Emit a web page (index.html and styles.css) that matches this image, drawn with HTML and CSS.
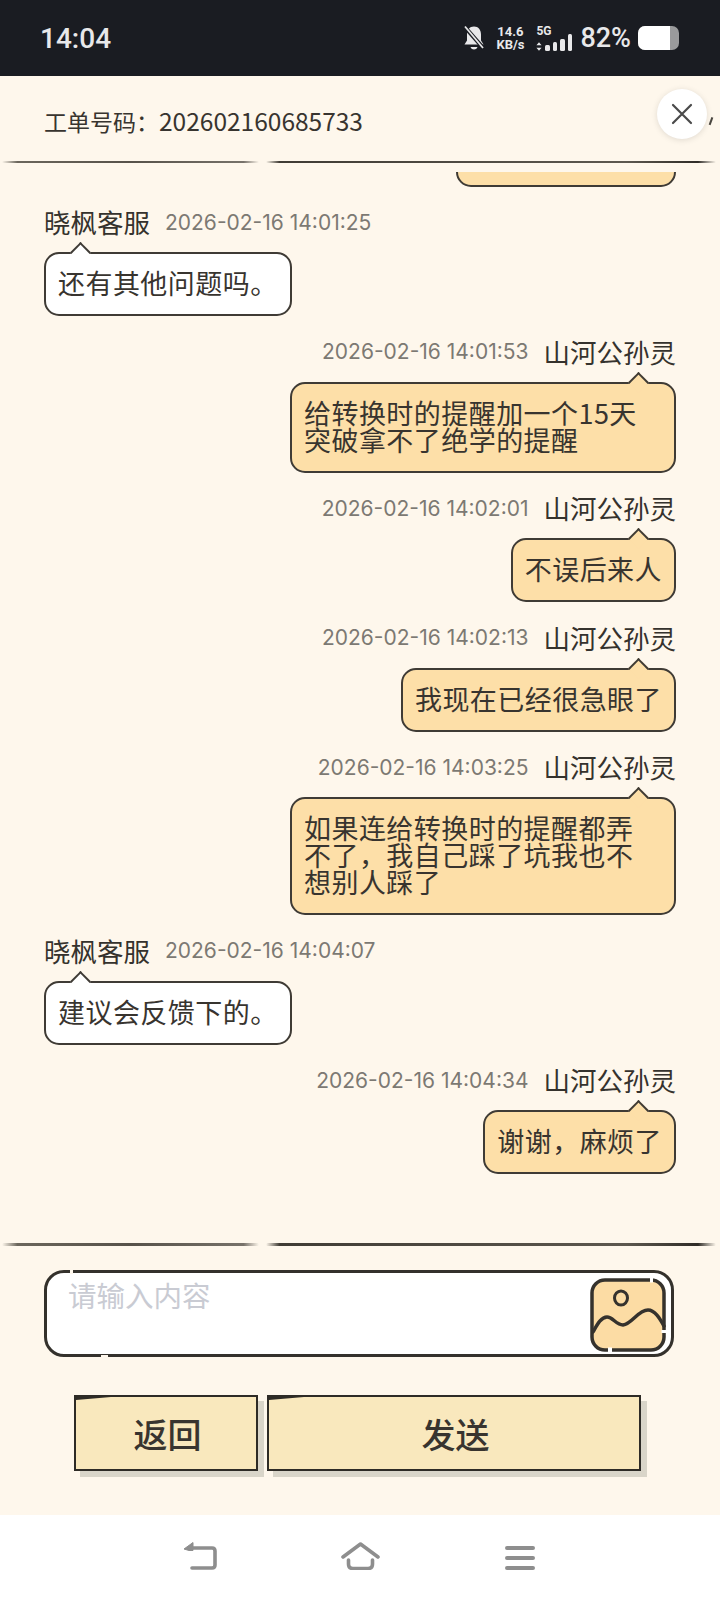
FILE: index.html
```html
<!DOCTYPE html>
<html lang="zh-CN">
<head>
  <meta charset="UTF-8" />
  <meta name="viewport" content="width=device-width, initial-scale=1" />
  <title>工单详情</title>
  <link rel="stylesheet" href="styles.css">
</head>
<body>
  <div class="statusBar">
    <span class="clock">14:04</span>
    <div class="statusIcons">
      <svg class="bellIcon" width="22" height="26" viewBox="0 0 22 26">
        <path d="M11 1.500c-4.500 0-7 3.500-7 8v6l-2.500 4h19l-2.500-4v-6c0-4.500-2.500-8-7-8z" fill="#e8e8ea"/>
        <path d="M7.500 22c.8 1.800 2 2.500 3.500 2.500s2.700-.7 3.500-2.500z" fill="#e8e8ea"/>
        <path d="M1 1l20 23" stroke="#1a1c22" stroke-width="4"/>
        <path d="M2 1.500l18 21.500" stroke="#e8e8ea" stroke-width="1.800"/>
      </svg>
      <div class="netSpeed"><span>14.6</span><span>KB/s</span></div>
      <div class="signal">
        <div class="signalType">
          <span>5G</span>
          <svg width="6" height="9" viewBox="0 0 7 10"><path d="M3.500 0l3 3.600h-6zM3.500 10l-3-3.600h6z" fill="#e8e8ea"/></svg>
        </div>
        <div class="signalBars"><i class="barA"></i><i class="barB"></i><i class="barC"></i><i class="barD"></i></div>
      </div>
      <span class="batteryText">82%</span>
      <div class="battery"><div class="batteryFill"></div></div>
    </div>
  </div>

  <main class="ticket">
    <header class="ticketHead">工单号码：<span class="ticketNo">202602160685733</span></header>
    <button class="closeBtn" aria-label="关闭">
      <svg width="22" height="22" viewBox="0 0 22 22"><path d="M2 2l18 18M20 2L2 20" stroke="#4a4a4a" stroke-width="2.200" stroke-linecap="round"/></svg>
    </button>
    <div class="divider"><span class="dividerShort"></span><span class="dividerLong"></span></div>

    <section class="chat">
      <div class="msg mine">
        <div class="bubble bubbleClipped"></div>
      </div>

      <div class="msg">
        <div class="msgHead"><span class="name">晓枫客服</span><span class="time">2026-02-16 14:01:25</span></div>
        <div class="bubble">还有其他问题吗。</div>
      </div>

      <div class="msg mine">
        <div class="msgHead"><span class="name">山河公孙灵</span><span class="time">2026-02-16 14:01:53</span></div>
        <div class="bubble bubbleLong">给转换时的提醒加一个15天突破拿不了绝学的提醒</div>
      </div>

      <div class="msg mine">
        <div class="msgHead"><span class="name">山河公孙灵</span><span class="time">2026-02-16 14:02:01</span></div>
        <div class="bubble">不误后来人</div>
      </div>

      <div class="msg mine">
        <div class="msgHead"><span class="name">山河公孙灵</span><span class="time">2026-02-16 14:02:13</span></div>
        <div class="bubble">我现在已经很急眼了</div>
      </div>

      <div class="msg mine">
        <div class="msgHead"><span class="name">山河公孙灵</span><span class="time">2026-02-16 14:03:25</span></div>
        <div class="bubble bubbleLong">如果连给转换时的提醒都弄不了，我自己踩了坑我也不想别人踩了</div>
      </div>

      <div class="msg">
        <div class="msgHead"><span class="name">晓枫客服</span><span class="time">2026-02-16 14:04:07</span></div>
        <div class="bubble">建议会反馈下的。</div>
      </div>

      <div class="msg mine">
        <div class="msgHead"><span class="name">山河公孙灵</span><span class="time">2026-02-16 14:04:34</span></div>
        <div class="bubble">谢谢，麻烦了</div>
      </div>
    </section>

    <div class="divider dividerThick"><span class="dividerShort"></span><span class="dividerLong"></span></div>

    <div class="composer">
      <span class="placeholder">请输入内容</span>
      <svg class="imageBtn" width="76" height="74" viewBox="0 0 76 74">
        <rect x="2" y="2" width="72" height="70" rx="13" fill="#fcdca4" stroke="#35322d" stroke-width="3.500"/>
        <ellipse cx="31" cy="20" rx="6.500" ry="7" fill="none" stroke="#35322d" stroke-width="3"/>
        <path d="M3 54c4-7 8-15 14-15 6 0 9 8 16 8 9-1 15-15 25-15 7 0 12 9 16 16" fill="none" stroke="#35322d" stroke-width="3.500" stroke-linecap="round"/>
        <path d="M60 2h3M74 52v3M18 72h4" fill="none" stroke="#fff" stroke-width="5"/>
      </svg>
    </div>

    <div class="actions">
      <button class="sketchBtn backBtn">返回</button>
      <button class="sketchBtn sendBtn">发送</button>
    </div>
  </main>

  <nav class="navBar">
    <svg width="34" height="28" viewBox="0 0 34 28">
      <path d="M6 6h23c2 0 3 1 3 3v14c0 2-1 3-3 3H9" fill="none" stroke="#8e8e8e" stroke-width="3.600" stroke-linecap="round"/>
      <path d="M10 .5v8H6L1 7z" fill="#8e8e8e" stroke="#8e8e8e" stroke-linejoin="round"/>
    </svg>
    <svg width="39" height="28" viewBox="0 0 39 28">
      <path d="M2 15L19.500 2 37 15" fill="none" stroke="#8e8e8e" stroke-width="3.600" stroke-linecap="round" stroke-linejoin="round"/>
      <path d="M7.500 18v4q0 4.500 4.500 4.500h15q4.500 0 4.500-4.500v-4" fill="none" stroke="#8e8e8e" stroke-width="3.600" stroke-linecap="round"/>
    </svg>
    <svg class="menuIcon" width="30" height="26" viewBox="0 0 30 26">
      <path d="M2 3h26M2 13h26M2 23h26" fill="none" stroke="#8e8e8e" stroke-width="4" stroke-linecap="round"/>
    </svg>
  </nav>
</body>
</html>
```

FILE: styles.css
```css
/* page shell */
* {
  box-sizing: border-box;
}
body {
  margin: 0;
  width: 720px;
  height: 1600px;
  overflow: hidden;
  display: flex;
  flex-direction: column;
  background: #fef7ec;
  color: #38342f;
  font-family: "Noto Sans CJK SC", "Noto Sans", sans-serif;
}

/* status bar */
.statusBar {
  height: 76px;
  flex-shrink: 0;
  padding: 0 41px 0 40px;
  display: flex;
  align-items: center;
  justify-content: space-between;
  background: #1a1c22;
  color: #e8e8ea;
  font-family: Roboto, sans-serif;
}
.clock {
  font-size: 28px;
  font-weight: 500;
}
.statusIcons {
  display: flex;
  align-items: center;
}
.bellIcon {
  margin-right: 6px;
}
.netSpeed {
  display: flex;
  flex-direction: column;
  width: 38px;
  font-size: 13px;
  font-weight: 700;
  line-height: 13px;
  text-align: center;
}
.signal {
  display: flex;
  align-items: flex-end;
  margin-left: 7px;
}
.signalType {
  display: flex;
  flex-direction: column;
  align-items: flex-start;
  gap: 5px;
  width: 15px;
  font-size: 12px;
  font-weight: 700;
  line-height: 11px;
}
.signalBars {
  display: flex;
  align-items: flex-end;
  gap: 3px;
  margin-left: -6px;
}
.signalBars i {
  display: block;
  width: 4.500px;
  border-radius: 1.500px;
  background: #e8e8ea;
}
.barA { height: 6px; }
.barB { height: 9px; }
.barC { height: 12px; }
.barD { height: 17px; }
.batteryText {
  margin-left: 8px;
  font-size: 27px;
  font-weight: 500;
  line-height: 30px;
}
.battery {
  width: 41px;
  height: 24px;
  margin-left: 7px;
  border-radius: 7px;
  overflow: hidden;
  background: #9a9a9c;
}
.batteryFill {
  width: 32px;
  height: 100%;
  background: #fff;
}

/* ticket panel */
.ticket {
  position: relative;
  flex: 1;
  min-height: 0;
  display: flex;
  flex-direction: column;
}
.ticketHead {
  height: 85px;
  flex-shrink: 0;
  padding: 29px 0 0 44px;
  font-size: 23px;
  line-height: 32px;
}
.ticketNo {
  font-size: 24.500px;
}
.closeBtn {
  position: absolute;
  top: 13px;
  right: 13px;
  width: 50px;
  height: 50px;
  padding: 0;
  border: none;
  border-radius: 50%;
  background: #fff;
  box-shadow: 0 1px 6px rgba(0, 0, 0, 0.12);
  display: flex;
  align-items: center;
  justify-content: center;
}
.closeBtn::after {
  content: "";
  position: absolute;
  top: 28px;
  right: -4px;
  width: 1.500px;
  height: 8px;
  background: #4a463f;
  transform: rotate(20deg);
}
.divider {
  flex-shrink: 0;
  height: 3px;
  padding: 0 4px 0 2px;
  display: flex;
  gap: 7px;
}
.divider span {
  display: block;
  height: 2px;
  border-radius: 2px;
}
.dividerThick span {
  height: 3px;
}
.dividerShort {
  width: 257px;
  background: linear-gradient(90deg, #fef7ec, #6b665c 6%, #57524a 50%, #77726a 94%, #fef7ec);
}
.dividerLong {
  flex: 1;
  background: linear-gradient(90deg, #fef7ec, #403c35 3%, #5d584f 80%, #2f2c27 96%, #fef7ec);
}

/* messages */
.chat {
  flex: 1;
  min-height: 0;
  margin-top: 8px;
  padding: 0 44px 69px;
  overflow: hidden;
  display: flex;
  flex-direction: column;
  justify-content: flex-end;
  gap: 20.500px;
}
.msg {
  flex-shrink: 0;
  display: flex;
  flex-direction: column;
  align-items: flex-start;
}
.msg.mine {
  align-items: flex-end;
}
.msgHead {
  display: flex;
  align-items: center;
  gap: 15px;
  height: 30px;
  margin-bottom: 15px;
}
.mine .msgHead {
  flex-direction: row-reverse;
}
.name {
  font-size: 26.500px;
  line-height: 30px;
  color: #35322d;
}
.time {
  font-family: Inter, Roboto, sans-serif;
  font-size: 21px;
  color: #7c7973;
}
.bubble {
  position: relative;
  padding: 15px 12px 18px;
  border: 2px solid #3f3b35;
  border-radius: 15px;
  background: #fff;
  font-size: 27px;
  letter-spacing: 0.450px;
  line-height: 27px;
}
.mine .bubble {
  background: #fddfa8;
}
.bubble::before {
  content: "";
  position: absolute;
  top: -9px;
  left: 27px;
  width: 13px;
  height: 13px;
  border-top: 2px solid #3f3b35;
  border-left: 2px solid #3f3b35;
  background: inherit;
  transform: rotate(45deg);
}
.mine .bubble::before {
  left: auto;
  right: 28px;
}
.bubbleLong {
  width: 386px;
  padding-right: 36px;
}
.bubbleClipped {
  width: 220px;
  height: 64px;
}

/* input box */
.composer {
  position: relative;
  flex-shrink: 0;
  height: 87px;
  margin: 24px 46px 0 44px;
  padding: 5px 5px 0 21px;
  display: flex;
  align-items: flex-start;
  justify-content: space-between;
  border: 3px solid #34312c;
  border-radius: 20px;
  background: #fff;
}
.composer::before {
  content: "";
  position: absolute;
  top: -4px;
  left: 23px;
  width: 3px;
  height: 5px;
  background: #fef7ec;
}
.composer::after {
  content: "";
  position: absolute;
  bottom: -4px;
  left: 54px;
  width: 7px;
  height: 3px;
  background: #fef7ec;
}
.placeholder {
  margin-top: -2px;
  font-size: 28.500px;
  line-height: 38px;
  color: #c9cbd3;
}
.imageBtn {
  flex-shrink: 0;
}

/* buttons */
.actions {
  flex-shrink: 0;
  height: 76px;
  margin-top: 38px;
  margin-bottom: 44px;
  padding-left: 74px;
  display: flex;
  gap: 9px;
}
.sketchBtn {
  position: relative;
  height: 76px;
  padding: 0 0 0 3px;
  border: 2.500px solid #2e2b26;
  background: #f9e8bd;
  box-shadow: 6px 6px 0 #d9d5c9;
  color: #38342f;
  font-family: "Noto Sans CJK SC", sans-serif;
  font-size: 34px;
  font-weight: 500;
}
.sketchBtn::before {
  content: "";
  position: absolute;
  top: 0;
  left: 0;
  width: 35px;
  height: 3px;
  background: #2e2b26;
  clip-path: polygon(0 0, 100% 0, 0 100%);
}
.backBtn {
  width: 184px;
}
.sendBtn {
  width: 374px;
}

/* bottom nav */
.navBar {
  height: 85px;
  flex-shrink: 0;
  padding-top: 27px;
  display: grid;
  grid-template-columns: repeat(3, 160px);
  justify-content: center;
  justify-items: center;
  align-items: start;
  background: #fff;
}
.menuIcon {
  margin-top: 3px;
}
```
